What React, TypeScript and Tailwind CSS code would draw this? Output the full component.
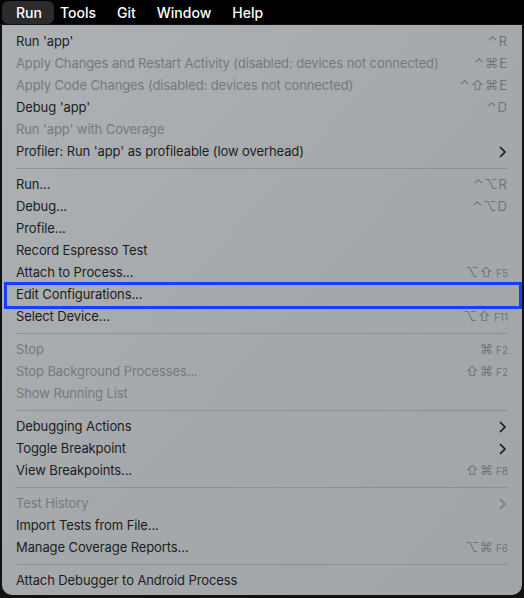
import React from 'react';

type Item =
  | { sep: true }
  | {
      sep?: false;
      label: string;
      keys?: string;
      fkey?: string;
      disabled?: boolean;
      sub?: boolean;
      focus?: boolean;
    };

const items: Item[] = [
  { label: "Run 'app'", keys: '⌃R' },
  { label: 'Apply Changes and Restart Activity (disabled: devices not connected)', keys: '⌃⌘E', disabled: true },
  { label: 'Apply Code Changes (disabled: devices not connected)', keys: '⌃⇧⌘E', disabled: true },
  { label: "Debug 'app'", keys: '⌃D' },
  { label: "Run 'app' with Coverage", disabled: true },
  { label: "Profiler: Run 'app' as profileable (low overhead)", sub: true },
  { sep: true },
  { label: 'Run...', keys: '⌃⌥R' },
  { label: 'Debug...', keys: '⌃⌥D' },
  { label: 'Profile...' },
  { label: 'Record Espresso Test' },
  { label: 'Attach to Process...', keys: '⌥⇧', fkey: 'F5' },
  { label: 'Edit Configurations...', focus: true },
  { label: 'Select Device...', keys: '⌥⇧', fkey: 'F11' },
  { sep: true },
  { label: 'Stop', keys: '⌘', fkey: 'F2', disabled: true },
  { label: 'Stop Background Processes...', keys: '⇧⌘', fkey: 'F2', disabled: true },
  { label: 'Show Running List', disabled: true },
  { sep: true },
  { label: 'Debugging Actions', sub: true },
  { label: 'Toggle Breakpoint', sub: true },
  { label: 'View Breakpoints...', keys: '⇧⌘', fkey: 'F8' },
  { sep: true },
  { label: 'Test History', sub: true, disabled: true },
  { label: 'Import Tests from File...' },
  { label: 'Manage Coverage Reports...', keys: '⌥⌘', fkey: 'F6' },
  { sep: true },
  { label: 'Attach Debugger to Android Process' },
];

function Chevron({ muted }: { muted?: boolean }) {
  return (
    <svg width="8" height="12" viewBox="0 0 8 12" className="mr-[1px]">
      <path
        d="M1.5 1.5 L6 6 L1.5 10.5"
        fill="none"
        stroke={muted ? '#7c7f82' : '#1b1c1d'}
        strokeWidth="1.7"
        strokeLinecap="round"
        strokeLinejoin="round"
      />
    </svg>
  );
}

export default function App() {
  return (
    <div
      className="w-[524px] h-[598px] bg-[#111214] overflow-hidden flex flex-col"
      style={{ fontFamily: 'Inter, "Noto Sans", sans-serif' }}
    >
      {/* Menu bar */}
      <div className="h-[24px] bg-black flex items-center text-[14px] font-medium text-white shrink-0">
        <div className="ml-[2px] w-[52px] h-[23px] rounded-md bg-[#2b2b2d] flex items-center pl-[14px]">Run</div>
        <div className="flex items-center gap-[21px] pl-[6px]">
          <span>Tools</span>
          <span>Git</span>
          <span>Window</span>
          <span>Help</span>
        </div>
      </div>

      {/* Dropdown */}
      <div className="mx-[2px] mt-[1px] w-[520px] h-[570px] rounded-b-[10px] bg-gradient-to-br from-[#aeb1b3] via-[#a6a9ab] to-[#a2a5a8] pt-[6px] text-[13px] tracking-[-0.1px] shrink-0">
        {items.map((it, i) =>
          it.sep ? (
            <div key={i} className="h-[11px] flex items-center px-[14px]">
              <div className="h-px w-full bg-[#8f9294]" />
            </div>
          ) : (
            <div
              key={i}
              className="relative h-[22px] flex items-center justify-between pl-[14px] pr-[14px]"
            >
              {it.focus && (
                <div className="absolute -top-[2px] -bottom-[3px] left-[2px] right-0 border-[3px] border-[#1a3cff]" />
              )}
              <span className={it.disabled ? 'text-[#76797c]' : 'text-[#1c1d1e]'}>{it.label}</span>
              {it.sub ? (
                <Chevron muted={it.disabled} />
              ) : it.keys ? (
                <span className="flex items-baseline gap-[2px] text-[#717477] tracking-[1px]">
                  <span>{it.keys}</span>
                  {it.fkey && <span className="text-[10px] tracking-normal">{it.fkey}</span>}
                </span>
              ) : null}
            </div>
          )
        )}
      </div>
    </div>
  );
}
